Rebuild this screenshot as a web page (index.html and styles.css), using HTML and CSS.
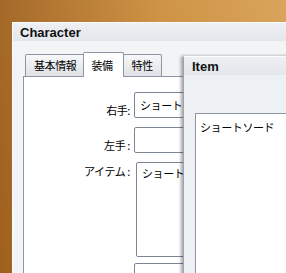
FILE: index.html
```html
<!doctype html>
<html lang="ja">
  <head>
    <meta charset="utf-8">
    <title>Character</title>
    <link rel="stylesheet" href="styles.css">
  </head>
  <body>
    <div class="desktop">
      <section class="window character">
        <header class="titlebar">Character</header>
        <div class="window-body">
          <nav class="tabs">
            <span class="tab">基本情報</span>
            <span class="tab selected">装備</span>
            <span class="tab">特性</span>
          </nav>
          <div class="panel">
            <div class="form">
              <label class="label">右手:</label>
              <div class="field">ショートソード</div>
              <label class="label">左手 :</label>
              <div class="field"></div>
              <label class="label top">アイテム :</label>
              <div class="field area">ショートソード</div>
              <label class="label">防具 :</label>
              <div class="field"></div>
            </div>
          </div>
        </div>
      </section>

      <!-- floating window on top -->
      <section class="window item">
        <header class="titlebar">Item</header>
        <div class="window-body">
          <div class="list">
            <div class="list-item">ショートソード</div>
          </div>
        </div>
      </section>
    </div>
  </body>
</html>
```

FILE: styles.css
```css
html, body {
  margin: 0;
  height: 100%;
  overflow: hidden;
}

body {
  font-family: "Noto Sans CJK JP", "DejaVu Sans", sans-serif;
  font-size: 11px;
  letter-spacing: -0.4px;
  color: #000;
  background:
    linear-gradient(90deg, rgba(110, 55, 10, 0.4), rgba(255, 220, 150, 0.1) 55%, rgba(255, 225, 160, 0.3)),
    linear-gradient(180deg, #c98b3d, #c17b2d);
}

.desktop {
  position: relative;
  height: 100%;
  padding: 22px 0 0 12px;
  box-sizing: border-box;
}

.window {
  background: #f3f4f6;
  border-left: 1px solid #fdfdfd;
  border-top: 1px solid #fdfdfd;
}

.titlebar {
  height: 17px;
  padding: 1px 0 0 7px;
  font-family: "Liberation Sans", Arial, sans-serif;
  font-weight: bold;
  font-size: 13px;
  letter-spacing: 0;
  line-height: 17px;
  color: #111;
  background: linear-gradient(180deg, #eef0f3, #e3e6ea);
}

.character {
  height: 100%;
}

.character .window-body {
  padding: 10px 0 0 10px;
}

.tabs {
  display: flex;
  align-items: flex-end;
  padding-left: 2px;
  height: 25px;
}

.tab {
  height: 21px;
  padding: 0 8px;
  line-height: 21px;
  margin-right: -1px;
  border: 1px solid #8d96a2;
  border-bottom: none;
  border-radius: 2px 2px 0 0;
  background: linear-gradient(180deg, #f6f7f8, #dfe2e6);
}

.tab.selected {
  height: 24px;
  line-height: 24px;
  padding: 0 10px 0 7px;
  background: #fff;
  position: relative;
  z-index: 1;
  margin-bottom: -1px;
  margin-left: -1px;
}

.panel {
  height: 240px;
  background: #fff;
  border-left: 1px solid #8d96a2;
  border-top: 1px solid #8d96a2;
}

.form {
  display: grid;
  grid-template-columns: 106px 1fr;
  column-gap: 4px;
  align-items: center;
  padding-top: 15px;
}

.label {
  text-align: right;
}

.label.top {
  align-self: start;
  padding-top: 1px;
}

.field {
  height: 24px;
  line-height: 24px;
  padding-left: 5px;
  margin-bottom: 9px;
  border: 1px solid #7d8794;
  border-radius: 2px;
  background: #fff;
  white-space: nowrap;
  overflow: hidden;
}

.field.area {
  height: 93px;
  line-height: 20px;
  margin: 0 0 6px 2px;
}

.item {
  position: absolute;
  left: 183px;
  top: 56px;
  width: 110px;
  height: 230px;
  border-left: 1px solid #9aa3ae;
  box-shadow: -2px 0 3px rgba(0, 0, 0, 0.35);
}

.item .titlebar {
  padding-left: 8px;
}

.item .window-body {
  padding: 38px 0 0 11px;
  background: #eef1f4;
  height: 100%;
}

.list {
  height: 100%;
  background: #fff;
  border: 1px solid #8d96a2;
  border-right: none;
  padding: 5px 0 0 4px;
}
```
